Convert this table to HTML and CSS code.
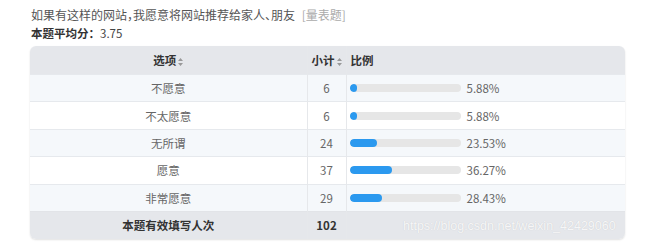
FILE: index.html
```html
<!DOCTYPE html>
<html lang="zh">
<head>
<meta charset="utf-8">
<link rel="stylesheet" href="styles.css">
</head>
<body>
<div class="page">
  <div class="title">如果有这样的网站，我愿意将网站推荐给家人、朋友 <span class="tag">[量表题]</span></div>
  <div class="avg"><b>本题平均分：</b>3.75</div>
  <div class="card">
    <table class="stats">
      <colgroup><col class="c1"><col class="c2"><col class="c3"></colgroup>
      <thead>
        <tr>
          <th class="center">选项<svg class="sort" width="5" height="8" viewBox="0 0 5 8"><path d="M2.5 0L5 3H0z M2.5 8L0 5h5z" fill="#999"/></svg></th>
          <th class="center">小计<svg class="sort" width="5" height="8" viewBox="0 0 5 8"><path d="M2.5 0L5 3H0z M2.5 8L0 5h5z" fill="#999"/></svg></th>
          <th class="left">比例</th>
        </tr>
      </thead>
      <tbody>
        <tr><td class="center">不愿意</td><td class="center">6</td><td><div class="ratio"><div class="track"><div class="fill" style="width:7%"></div></div><span class="pct">5.88%</span></div></td></tr>
        <tr><td class="center">不太愿意</td><td class="center">6</td><td><div class="ratio"><div class="track"><div class="fill" style="width:7%"></div></div><span class="pct">5.88%</span></div></td></tr>
        <tr><td class="center">无所谓</td><td class="center">24</td><td><div class="ratio"><div class="track"><div class="fill" style="width:25%"></div></div><span class="pct">23.53%</span></div></td></tr>
        <tr><td class="center">愿意</td><td class="center">37</td><td><div class="ratio"><div class="track"><div class="fill" style="width:38%"></div></div><span class="pct">36.27%</span></div></td></tr>
        <tr><td class="center">非常愿意</td><td class="center">29</td><td><div class="ratio"><div class="track"><div class="fill" style="width:29.5%"></div></div><span class="pct">28.43%</span></div></td></tr>
      </tbody>
      <tfoot>
        <tr><td class="center">本题有效填写人次</td><td class="center">102</td><td></td></tr>
      </tfoot>
    </table>
  </div>
  <div class="watermark">https://blog.csdn.net/weixin_42429060</div>
</div>
</body>
</html>
```

FILE: styles.css
```css
html, body {
  margin: 0;
  padding: 0;
  background: #ffffff;
}
body {
  font-family: "Noto Sans CJK SC", "Noto Sans", sans-serif;
  font-size: 12px;
  color: #555;
}
.page {
  position: relative;
  width: 650px;
  height: 249px;
  padding: 6px 25px 0 30px;
  box-sizing: border-box;
  overflow: hidden;
}
.title {
  font-size: 12px;
  line-height: 18px;
  color: #555;
  padding-left: 1px;
  font-feature-settings: "halt";
}
.tag {
  color: #aaa;
  margin-left: 4px;
}
.avg {
  font-size: 11.5px;
  line-height: 18px;
  color: #444;
  padding-left: 1px;
  margin-bottom: 4px;
}
.avg b {
  font-weight: bold;
  color: #333;
}
.card {
  width: 595px;
  border-radius: 6px;
  overflow: hidden;
  box-shadow: 0 1px 2px rgba(0,0,0,0.12);
}
.stats {
  width: 100%;
  border-collapse: collapse;
  table-layout: fixed;
}
.c1 { width: 277px; }
.c2 { width: 39px; }
.c3 { width: auto; }
.stats th, .stats td {
  padding: 0;
  font-size: 11.5px;
  border-left: 1px solid #e6e8eb;
  vertical-align: middle;
}
.stats th:first-child, .stats td:first-child { border-left: none; }
.stats thead th {
  height: 28px;
  background: #e5e7eb;
  color: #333;
  font-weight: bold;
}
.stats tbody td {
  height: 26.4px;
  border-top: 1px solid #e6e9ed;
  color: #666;
}
.stats tbody tr:nth-child(odd) td { background: #f5f8fb; }
.stats tbody tr:nth-child(even) td { background: #ffffff; }
.stats tfoot td {
  height: 27px;
  background: #e5e7eb;
  color: #333;
  font-weight: bold;
  border-top: 1px solid #e2e4e8;
}
.center { text-align: center; }
.left { text-align: left; padding-left: 4px !important; }
.sort {
  margin-left: 2px;
  vertical-align: -0.5px;
}
.ratio {
  display: flex;
  align-items: center;
  padding-left: 3px;
}
.track {
  width: 111px;
  height: 8px;
  border-radius: 4px;
  background: #e6e6e6;
  overflow: hidden;
}
.fill {
  height: 100%;
  border-radius: 4px;
  background: #2b99ef;
}
.pct {
  margin-left: 6px;
  color: #666;
}
.watermark {
  position: absolute;
  left: 403px;
  top: 219px;
  font-family: "Liberation Sans", sans-serif;
  font-size: 12.5px;
  color: rgba(255,255,255,0.85);
  text-shadow: 0 0 1px rgba(0,0,0,0.15);
  white-space: nowrap;
}
```
